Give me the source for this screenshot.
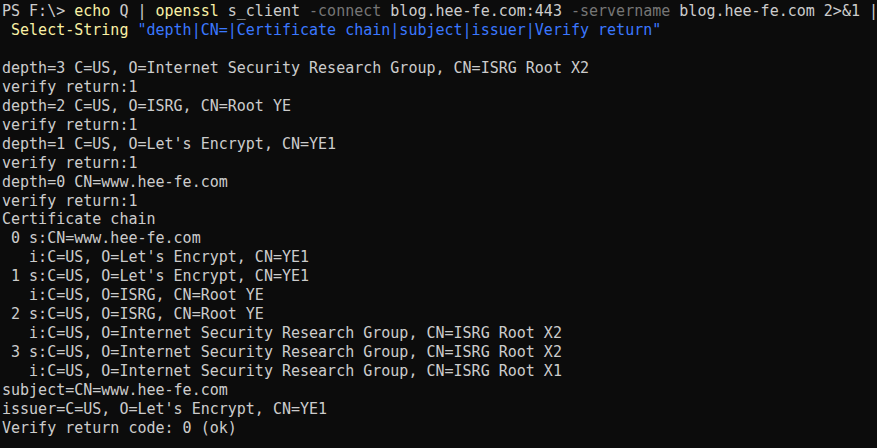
import React from "react";

const Y = ({ children }: { children: React.ReactNode }) => <span className="text-[#f9f1a5]">{children}</span>;
const G = ({ children }: { children: React.ReactNode }) => <span className="text-[#767676]">{children}</span>;
const B = ({ children }: { children: React.ReactNode }) => <span className="text-[#3b78ff]">{children}</span>;

const lines = [
  "depth=3 C=US, O=Internet Security Research Group, CN=ISRG Root X2",
  "verify return:1",
  "depth=2 C=US, O=ISRG, CN=Root YE",
  "verify return:1",
  "depth=1 C=US, O=Let's Encrypt, CN=YE1",
  "verify return:1",
  "depth=0 CN=www.hee-fe.com",
  "verify return:1",
  "Certificate chain",
  " 0 s:CN=www.hee-fe.com",
  "   i:C=US, O=Let's Encrypt, CN=YE1",
  " 1 s:C=US, O=Let's Encrypt, CN=YE1",
  "   i:C=US, O=ISRG, CN=Root YE",
  " 2 s:C=US, O=ISRG, CN=Root YE",
  "   i:C=US, O=Internet Security Research Group, CN=ISRG Root X2",
  " 3 s:C=US, O=Internet Security Research Group, CN=ISRG Root X2",
  "   i:C=US, O=Internet Security Research Group, CN=ISRG Root X1",
  "subject=CN=www.hee-fe.com",
  "issuer=C=US, O=Let's Encrypt, CN=YE1",
  "Verify return code: 0 (ok)",
];

export default function App() {
  return (
    <div
      className="w-[877px] h-[448px] overflow-hidden bg-[#0c0c0c] text-[#cccccc] text-[15px] leading-[18.95px] pt-[2px] pl-[2px] whitespace-pre"
      style={{ fontFamily: '"DejaVu Sans Mono", "Liberation Mono", monospace' }}
    >
      <div>
        PS F:\&gt; <Y>echo</Y> Q | <Y>openssl</Y> s_client <G>-connect</G> blog.hee-fe.com:443 <G>-servername</G> blog.hee-fe.com 2&gt;&amp;1 |
      </div>
      <div>
        {" "}<Y>Select-String</Y> <B>"depth|CN=|Certificate chain|subject|issuer|Verify return"</B>
      </div>
      <div>{" "}</div>
      {lines.map((l, i) => (
        <div key={i}>{l}</div>
      ))}
    </div>
  );
}
